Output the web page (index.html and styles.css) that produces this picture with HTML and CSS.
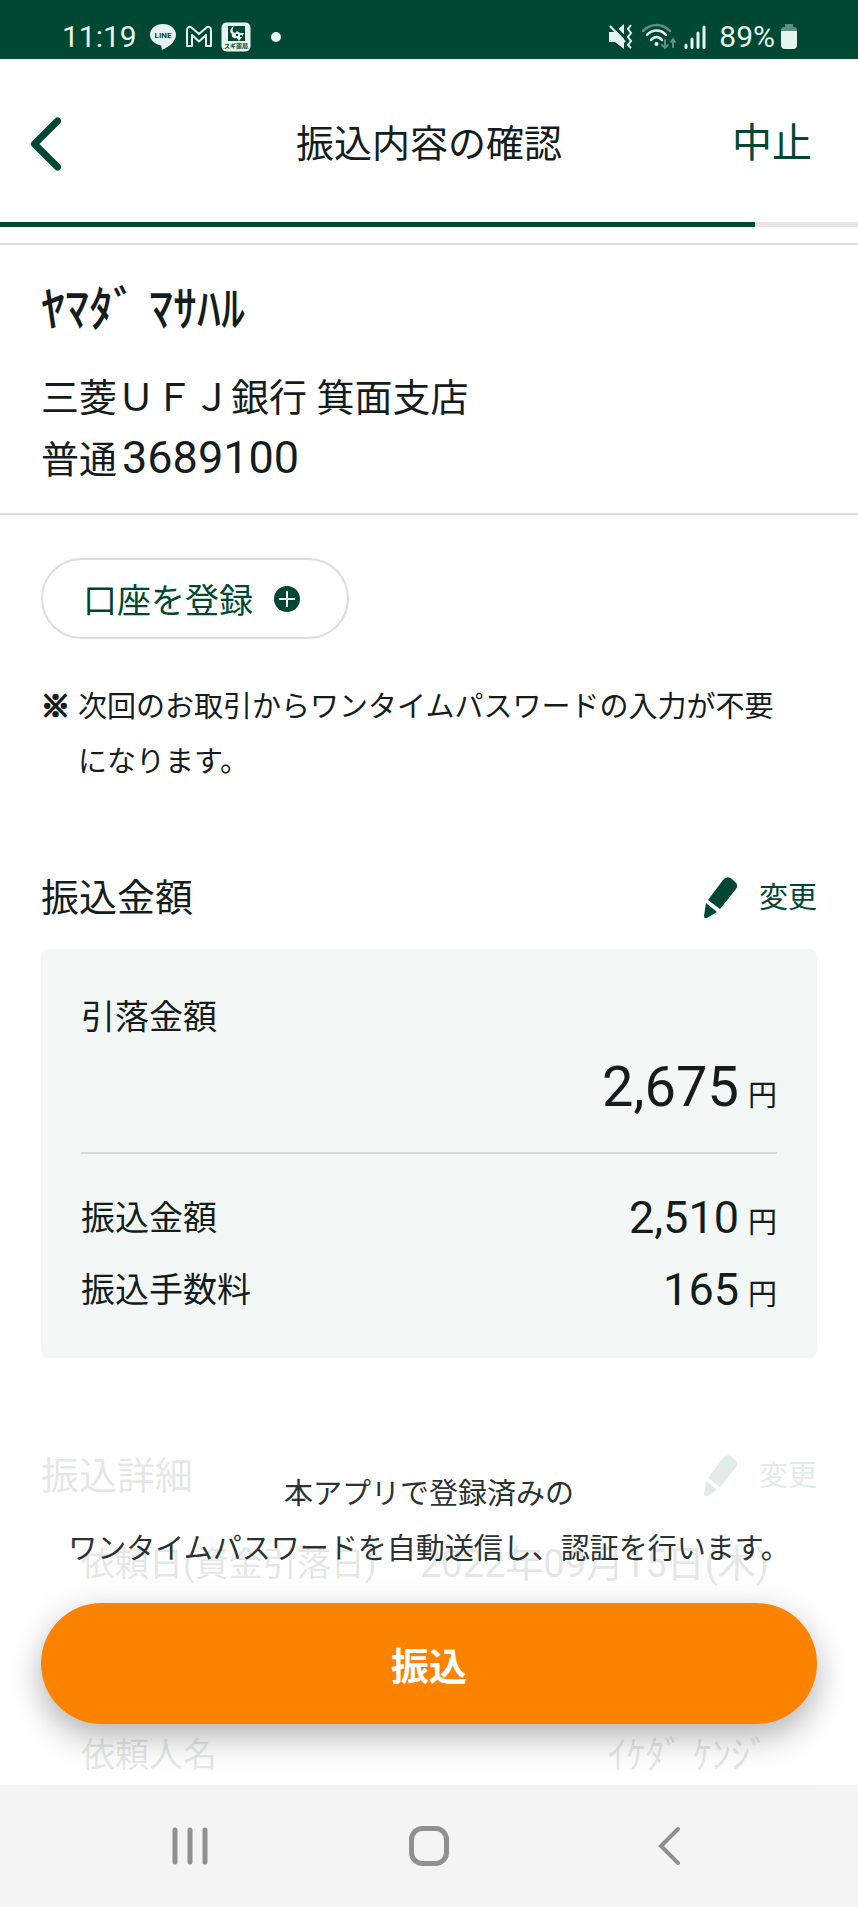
FILE: index.html
```html
<!DOCTYPE html>
<html lang="ja">
<head>
    <meta charset="UTF-8">
    <meta name="viewport" content="width=device-width, initial-scale=1.0">
    <title>振込内容の確認</title>
    <link rel="stylesheet" href="styles.css">
</head>
<body>
    <div class="status-bar">
        <div class="status-left">
            <span class="clock">11:19</span>
            <svg class="icon-line" width="28" height="28" viewBox="0 0 28 28">
                <path d="M14 1C6.800 1 1 5.600 1 11.800c0 5.400 4.700 9.700 11.200 10.700l.7 4.500c5-2.200 14.100-7.400 14.100-15.200C27 5.600 21.200 1 14 1z" fill="#e6f3ee"/>
                <text x="14" y="15" text-anchor="middle" font-size="8" font-weight="700" fill="#004831">LINE</text>
            </svg>
            <svg width="28" height="24" viewBox="0 0 28 24" fill="none" stroke="#e6f3ee" stroke-width="2" stroke-linejoin="round">
                <path d="M2 5c0-3 2.500-4 4.500-2.500L14 9l7.500-6.500C23.500 1 26 2 26 5v16h-5V10l-7 6.500L7 10v11H2z"/>
            </svg>
            <svg class="icon-drug" width="30" height="30" viewBox="0 0 30 30">
                <rect x="0.500" y="0.500" width="29" height="29" rx="5" fill="#e6f3ee"/>
                <rect x="7" y="4" width="17" height="15" fill="#004831"/>
                <path d="M13 4c-4 2-5 6-2 8-1 3 2 5 5 4l2 3 3-4 2-4h-4l-3-2-2 2c-3-1-3-4-1-7z" fill="#e6f3ee"/>
                <path d="M15 12h2v2h-2zM19 13h2v2h-2z" fill="#004831"/>
                <text x="15" y="26" text-anchor="middle" font-size="6" font-weight="700" fill="#004831">スギ薬局</text>
            </svg>
            <span class="more-dot"></span>
        </div>
        <div class="status-right">
            <svg width="26" height="26" viewBox="0 0 26 26">
                <path d="M1 8h6l9-8v25l-9-7H1z" fill="#e6f3ee"/>
                <path d="M4 0l15 16" stroke="#004831" stroke-width="3"/>
                <path d="M2 2l15 16" stroke="#e6f3ee" stroke-width="2"/>
                <path d="M23 1l-3 4 3 4-3 4 3 4-3 4 3 3" fill="none" stroke="#e6f3ee" stroke-width="2"/>
            </svg>
            <svg class="icon-wifi" width="34" height="28" viewBox="0 0 34 28" fill="none" stroke="#e6f3ee" stroke-width="2.500" stroke-linecap="round">
                <path d="M1 8c8-8 19-8 27 0" stroke="#5c8f7e"/>
                <path d="M5 12c5-6 14-6 19 0M9 17c3-4 8-4 11 0"/>
                <circle cx="14.500" cy="21" r="2" fill="#e6f3ee" stroke="none"/>
                <path d="M23 17v8m-3-3l3 3 3-3M31 24v-8m-2 3l2-3 2 3" stroke="#5c8f7e" stroke-width="2"/>
            </svg>
            <svg class="icon-signal" width="23" height="26" viewBox="0 0 23 26" stroke="#e6f3ee" stroke-width="3" stroke-linecap="round">
                <path d="M2 21v2.500M8 15v8.500M14 9v14.500M20 3v20.500"/>
            </svg>
            <span class="battery-text">89%</span>
            <svg width="18" height="27" viewBox="0 0 18 27">
                <path d="M5 1h8v3h1q3 0 3 3v2H1V7q0-3 3-3h1z" fill="#5c8f7e"/>
                <path d="M1 8h16v14q0 4-4 4H5q-4 0-4-4z" fill="#e6f3ee"/>
            </svg>
        </div>
    </div>

    <header class="header">
        <button type="button" class="back-button" aria-label="戻る">
            <svg width="32" height="56" viewBox="0 0 32 56" fill="none" stroke="#004831" stroke-width="7" stroke-linecap="round" stroke-linejoin="round">
                <path d="M27.500 5L4.500 28l23 23"/>
            </svg>
        </button>
        <h1>振込内容の確認</h1>
        <button type="button" class="cancel-button">中止</button>
    </header>
    <div class="progress" role="progressbar" aria-label="進捗" aria-valuenow="88" aria-valuemin="0" aria-valuemax="100">
        <div class="progress-fill" style="width: 88%"></div>
    </div>

    <main>
        <section class="payee">
            <h2>ﾔﾏﾀﾞ ﾏｻﾊﾙ</h2>
            <p>三菱ＵＦＪ銀行 箕面支店</p>
            <p>普通<span class="account-number">3689100</span></p>
        </section>

        <section class="register">
            <button type="button" class="register-button">
                口座を登録
                <svg width="26" height="26" viewBox="0 0 26 26">
                    <circle cx="13" cy="13" r="13" fill="#004831"/>
                    <path d="M13 5v16M5 13h16" stroke="#fff" stroke-width="2"/>
                </svg>
            </button>
            <div class="note">
                <span class="note-mark">※</span>
                <p>次回のお取引からワンタイムパスワードの入力が不要<br>になります。</p>
            </div>
        </section>

        <section class="amount">
            <div class="section-head">
                <h3>振込金額</h3>
                <button type="button" class="edit-button">
                    <svg width="36" height="42" viewBox="0 0 36 42" fill="#004831">
                        <path d="M21 3q4-5 9-1l3 3q4 3 1 7L18 32 6 23z"/>
                        <path d="M4 26l11 9-10 6q-3 1-3-2z"/>
                    </svg>
                    変更
                </button>
            </div>
            <div class="card">
                <p class="label">引落金額</p>
                <p class="total"><span class="value">2,675</span><span class="yen">円</span></p>
                <div class="row">
                    <span class="label">振込金額</span>
                    <span class="price"><span class="value">2,510</span><span class="yen">円</span></span>
                </div>
                <div class="row">
                    <span class="label">振込手数料</span>
                    <span class="price"><span class="value">165</span><span class="yen">円</span></span>
                </div>
            </div>
        </section>

        <section class="details">
            <div class="section-head">
                <h3>振込詳細</h3>
                <button type="button" class="edit-button">
                    <svg width="36" height="42" viewBox="0 0 36 42" fill="#004831">
                        <path d="M21 3q4-5 9-1l3 3q4 3 1 7L18 32 6 23z"/>
                        <path d="M4 26l11 9-10 6q-3 1-3-2z"/>
                    </svg>
                    変更
                </button>
            </div>
            <div class="details-card">
                <div class="detail-row">
                    <span class="label">依頼日(資金引落日)</span>
                    <span class="detail-value">2022年09月15日(木)</span>
                </div>
                <div class="detail-row">
                    <span class="label">依頼人名</span>
                    <span class="detail-value">ｲｹﾀﾞ ｹﾝｼﾞ</span>
                </div>
            </div>
        </section>

        <!-- floats over the scrolling content -->
        <div class="submit-panel">
            <p>本アプリで登録済みの<br>ワンタイムパスワードを自動送信し、認証を行います。</p>
            <button type="submit" class="submit-button">振込</button>
        </div>
    </main>

    <nav class="system-nav">
        <button type="button" aria-label="履歴">
            <svg width="38" height="40" viewBox="0 0 38 40" stroke="#909090" stroke-width="5" stroke-linecap="round">
                <path d="M4 4v32M19 4v32M34 4v32"/>
            </svg>
        </button>
        <button type="button" aria-label="ホーム">
            <svg width="42" height="42" viewBox="0 0 42 42" fill="none" stroke="#909090" stroke-width="5">
                <rect x="3.500" y="3.500" width="35" height="35" rx="11"/>
            </svg>
        </button>
        <button type="button" aria-label="戻る">
            <svg width="24" height="40" viewBox="0 0 24 40" fill="none" stroke="#909090" stroke-width="4" stroke-linecap="round">
                <path d="M22 3L5 20l17 17"/>
            </svg>
        </button>
    </nav>
</body>
</html>
```

FILE: styles.css
```css
* {
    margin: 0;
    padding: 0;
    box-sizing: border-box;
}
body {
    display: flex;
    flex-direction: column;
    min-height: 100vh;
    font-family: Roboto, "Noto Sans CJK JP", sans-serif;
    background-color: #fff;
    color: #141d1c;
}
h1, h2, h3 {
    font-weight: 400;
}
svg {
    display: block;
    flex-shrink: 0;
}
button {
    font-family: inherit;
    color: #004831;
    background: none;
    border: none;
    cursor: pointer;
}

/* status bar */
.status-bar {
    display: flex;
    justify-content: space-between;
    height: 59px;
    padding: 14px 60px 0 62px;
    background-color: #004831;
    color: #e6f3ee;
    font-size: 30px;
    line-height: 44px;
}
.status-left, .status-right {
    display: flex;
    align-items: center;
}
.status-left {
    gap: 8px;
}
.clock {
    margin-right: 4px;
}
.more-dot {
    width: 10px;
    height: 10px;
    margin-left: 12px;
    border-radius: 50%;
    background-color: #e6f3ee;
}
.status-right {
    gap: 8px;
}
.battery-text {
    margin: 0 -3px 0 4px;
}

/* header */
.header {
    display: grid;
    grid-template-columns: 1fr auto 1fr;
    align-items: center;
    height: 163px;
    padding-top: 6px;
}
.header h1 {
    font-size: 38px;
    line-height: 56px;
}
.back-button {
    justify-self: start;
    padding-left: 30px;
}
.cancel-button {
    justify-self: end;
    padding-right: 46px;
    font-size: 40px;
    line-height: 56px;
}
.progress {
    height: 5px;
    background-color: #e6e6e6;
}
.progress-fill {
    height: 5px;
    background-color: #004831;
}

main {
    position: relative;
    flex: 1;
}

/* payee */
.payee {
    margin-top: 16px;
    padding: 34px 41px 22px;
    border-top: 2px solid #dadedd;
    border-bottom: 2px solid #dadedd;
    font-size: 38px;
    line-height: 62px;
}
.payee h2 {
    margin-bottom: 26px;
    font-size: 48px;
    font-weight: 500;
    line-height: 62px;
}
.account-number {
    margin-left: 5px;
    font-size: 45px;
    line-height: 1;
}

/* account registration */
.register {
    padding: 43px 41px 0;
}
.register-button {
    display: flex;
    align-items: center;
    gap: 21px;
    height: 81px;
    padding: 0 47px 0 40px;
    border: 2px solid #dadedd;
    border-radius: 41px;
    font-size: 34px;
}
.note {
    display: flex;
    gap: 8px;
    margin-top: 41px;
    font-size: 29px;
    line-height: 55px;
}
.note p {
    white-space: nowrap;
}
.note-mark {
    -webkit-text-stroke: 2px #141d1c;
}

/* amounts */
.amount {
    padding: 80px 41px 0;
}
.section-head {
    display: flex;
    justify-content: space-between;
    align-items: center;
    margin-bottom: 23px;
    line-height: 56px;
}
.section-head h3 {
    font-size: 38px;
}
.edit-button {
    display: flex;
    align-items: center;
    gap: 21px;
    font-size: 29px;
    line-height: 56px;
}
.card {
    padding: 40px 40px 32px;
    border-radius: 8px;
    background-color: #f3f7f6;
}
.label {
    font-size: 34px;
    line-height: 56px;
}
.total {
    display: flex;
    justify-content: flex-end;
    align-items: baseline;
    gap: 9px;
    margin-bottom: 28px;
    padding: 7px 0 30px;
    border-bottom: 2px solid #d6dada;
    line-height: 70px;
}
.total .value {
    font-size: 56px;
}
.row {
    display: flex;
    justify-content: space-between;
    align-items: center;
}
.price {
    display: flex;
    align-items: baseline;
    gap: 9px;
    line-height: 72px;
}
.price .value {
    font-size: 45px;
}
.yen {
    font-size: 29px;
    line-height: 1;
}

/* details */
.details {
    padding: 90px 41px 0;
}
.details-card {
    display: flex;
    flex-direction: column;
    gap: 131px;
    padding: 7px 48px 0 40px;
    background-color: #f3f7f6;
}
.detail-row {
    display: flex;
    justify-content: space-between;
    align-items: center;
    line-height: 60px;
}
.detail-value {
    font-size: 38px;
}

/* submit */
.submit-panel {
    position: absolute;
    right: 0;
    bottom: 0;
    left: 0;
    padding: 40px 41px 61px;
    background-color: rgba(255, 255, 255, 0.89);
    color: #2a3332;
    font-size: 29px;
    line-height: 55px;
    text-align: center;
}
.submit-panel p {
    margin-bottom: 26px;
    white-space: nowrap;
}
.submit-button {
    display: block;
    width: 100%;
    height: 121px;
    border-radius: 61px;
    background-color: #fc8300;
    box-shadow: 0 12px 32px rgba(0, 0, 0, 0.3);
    color: #fff;
    font-size: 38px;
    font-weight: 700;
}

/* system navigation */
.system-nav {
    display: flex;
    height: 122px;
    padding: 0 70px;
    background-color: #f4f4f4;
}
.system-nav button {
    display: flex;
    flex: 1;
    justify-content: center;
    align-items: center;
}
```
